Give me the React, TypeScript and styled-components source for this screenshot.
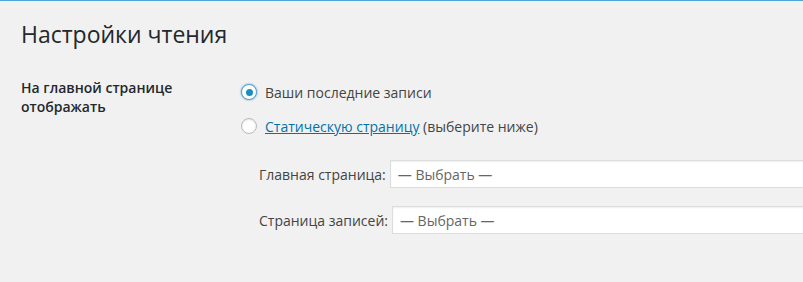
import React from "react";
import styled, { createGlobalStyle } from "styled-components";

const Global = createGlobalStyle`
  html, body {
    margin: 0;
    padding: 0;
    background: #f1f1f1;
    overflow: hidden;
  }
  body {
    font-family: "Open Sans", "Noto Sans", sans-serif;
    font-size: 14px;
    color: #444;
  }
`;

const Page = styled.div`
  border-top: 1px solid #4ba6d4;
  width: 803px;
  height: 281px;
  overflow: hidden;
  padding-left: 21px;
  box-sizing: border-box;
`;

const Title = styled.h1`
  margin: 19px 0 0;
  font-size: 23px;
  line-height: 29px;
  font-weight: 400;
  color: #23282d;
`;

const Row = styled.div`
  display: grid;
  grid-template-columns: 220px 1fr;
  margin-top: 30px;
`;

const RowLabel = styled.div`
  font-weight: 600;
  font-size: 14px;
  line-height: 18.5px;
  color: #23282d;
  width: 170px;
`;

const Field = styled.div`
  display: flex;
  flex-direction: column;
  padding-top: 3px;
  gap: 14px;
`;

const RadioRow = styled.label`
  display: flex;
  align-items: center;
  height: 20px;
  gap: 8px;
  white-space: nowrap;
`;

const Radio = styled.span<{ $checked?: boolean }>`
  width: 16px;
  height: 16px;
  box-sizing: border-box;
  border-radius: 50%;
  background: #fff;
  border: 1px solid ${(p) => (p.$checked ? "#5b9dd9" : "#b4b9be")};
  box-shadow: ${(p) =>
    p.$checked
      ? "0 0 2px rgba(30,140,190,.8)"
      : "inset 0 1px 2px rgba(0,0,0,.1)"};
  display: flex;
  align-items: center;
  justify-content: center;
  flex: none;
  &::after {
    content: "";
    display: ${(p) => (p.$checked ? "block" : "none")};
    width: 7px;
    height: 7px;
    border-radius: 50%;
    background: #1e8cbe;
  }
`;

const Link = styled.a`
  color: #0073aa;
  text-decoration: underline;
`;

const SelectList = styled.div`
  display: flex;
  flex-direction: column;
  gap: 18px;
  margin-top: 10px;
  padding-left: 18px;
`;

const SelectRow = styled.label`
  display: flex;
  align-items: center;
  gap: 4px;
  white-space: nowrap;
`;

const SelectBox = styled.div`
  width: 520px;
  height: 28px;
  box-sizing: border-box;
  background: #fff;
  border: 1px solid #ddd;
  box-shadow: inset 0 1px 2px rgba(0, 0, 0, 0.07);
  display: flex;
  align-items: center;
  padding-left: 7px;
  color: #666;
  flex: none;
`;

export default function App() {
  return (
    <>
      <Global />
      <Page>
        <Title>Настройки чтения</Title>
        <Row>
          <RowLabel>На главной странице отображать</RowLabel>
          <Field>
            <RadioRow>
              <Radio $checked />
              <span>Ваши последние записи</span>
            </RadioRow>
            <RadioRow>
              <Radio />
              <span>
                <Link href="#">Статическую страницу</Link> (выберите ниже)
              </span>
            </RadioRow>
            <SelectList>
              <SelectRow>
                Главная страница:
                <SelectBox>— Выбрать —</SelectBox>
              </SelectRow>
              <SelectRow>
                Страница записей:
                <SelectBox>— Выбрать —</SelectBox>
              </SelectRow>
            </SelectList>
          </Field>
        </Row>
      </Page>
    </>
  );
}
